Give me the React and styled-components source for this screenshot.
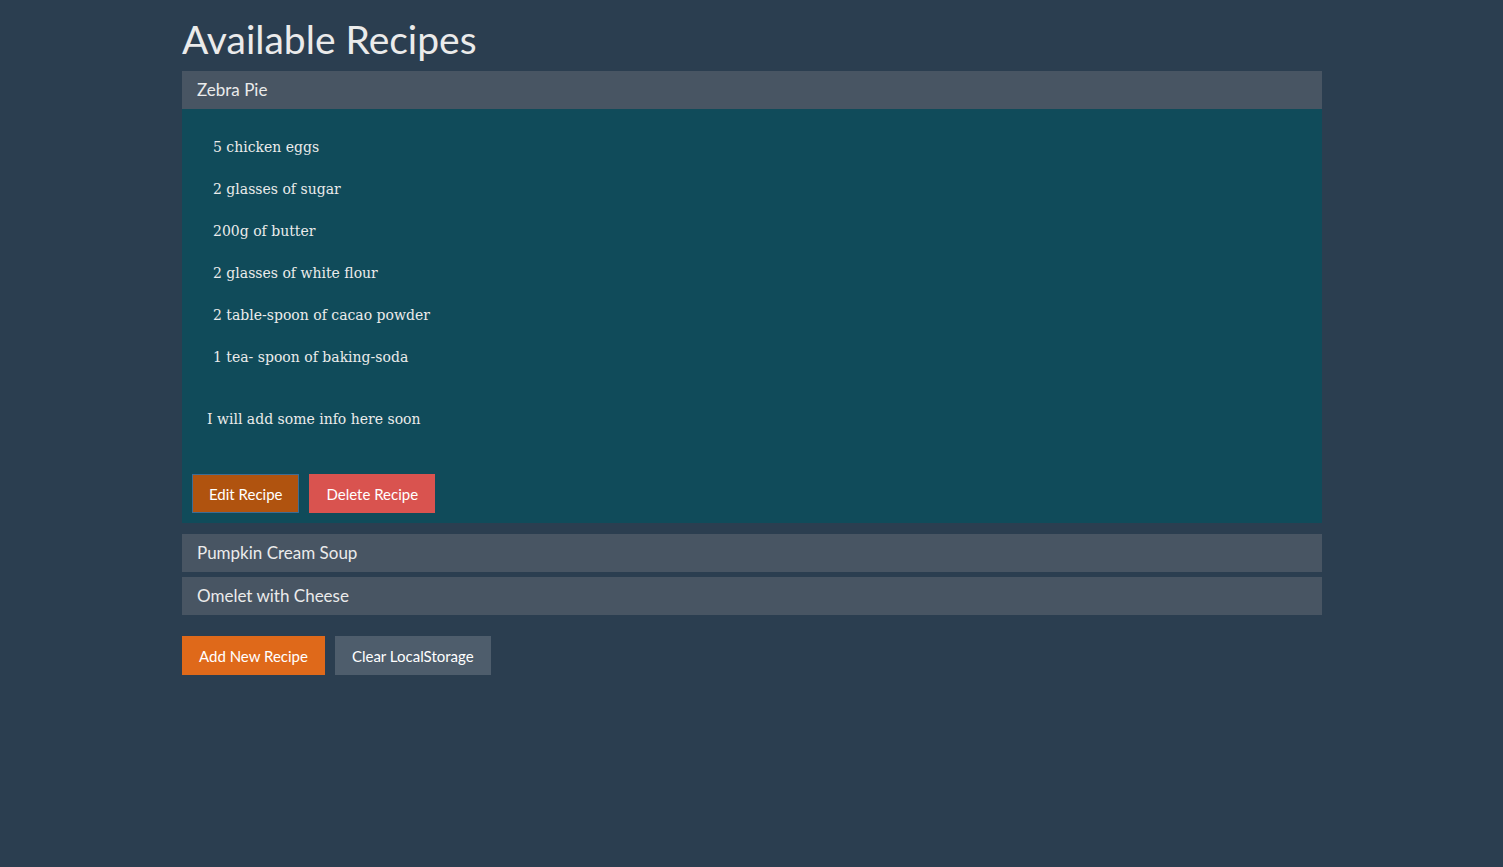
import React, { useState } from 'react'
import styled, { createGlobalStyle } from 'styled-components'

const recipes = [
    {
        name: 'Zebra Pie',
        ingredients: [
            '5 chicken eggs',
            '2 glasses of sugar',
            '200g of butter',
            '2 glasses of white flour',
            '2 table-spoon of cacao powder',
            '1 tea- spoon of baking-soda',
        ],
        info: 'I will add some info here soon',
    },
    { name: 'Pumpkin Cream Soup', ingredients: [], info: '' },
    { name: 'Omelet with Cheese', ingredients: [], info: '' },
]

const GlobalStyle = createGlobalStyle`
    html, body {
        margin: 0;
        padding: 0;
        background-color: #2B3E50;
        font-family: Lato, "Liberation Sans", sans-serif;
        color: #EBEBEB;
    }
`

function App() {
    const [open, setOpen] = useState(0)

    return (
        <Container>
            <GlobalStyle />
            <Title>Available Recipes</Title>
            {recipes.map((recipe, i) => (
                <Panel key={recipe.name} open={open === i}>
                    <PanelHeading onClick={() => setOpen(open === i ? -1 : i)}>
                        {recipe.name}
                    </PanelHeading>
                    {open === i && (
                        <PanelBody>
                            <Ingredients>
                                {recipe.ingredients.map(item => (
                                    <Ingredient key={item}>{item}</Ingredient>
                                ))}
                            </Ingredients>
                            <Info>{recipe.info}</Info>
                            <Actions>
                                <Button variant="edit">Edit Recipe</Button>
                                <Button variant="danger">Delete Recipe</Button>
                            </Actions>
                        </PanelBody>
                    )}
                </Panel>
            ))}
            <Footer>
                <Button variant="primary">Add New Recipe</Button>
                <Button variant="default">Clear LocalStorage</Button>
            </Footer>
        </Container>
    )
}

const Container = styled.div`
    width: 1140px;
    margin: 0 auto;
    padding-left: 1px;
`

const Title = styled.h1`
    font-family: Lato, "Liberation Sans", sans-serif;
    font-weight: 400;
    font-size: 39px;
    line-height: 42px;
    margin: 18px 0 11px;
    color: #EBEBEB;
`

const Panel = styled.div`
    margin-bottom: ${props => props.open ? '11px' : '5px'};
`

const PanelHeading = styled.div`
    height: 38px;
    line-height: 38px;
    padding: 0 15px;
    background-color: #485563;
    font-size: 17px;
    color: #EBEBEB;
    cursor: pointer;
`

const PanelBody = styled.div`
    background-color: #104B5A;
    padding: 28px 10px 10px;
`

const Ingredients = styled.ul`
    list-style: none;
    margin: 0;
    padding: 0 0 0 21px;
`

const Ingredient = styled.li`
    font-family: "DejaVu Serif", "Liberation Serif", serif;
    font-size: 14px;
    line-height: 20px;
    margin-bottom: 22px;
    color: #EBEBEB;
`

const Info = styled.p`
    font-family: "DejaVu Serif", "Liberation Serif", serif;
    font-size: 14px;
    line-height: 20px;
    margin: 42px 0 45px 15px;
    color: #EBEBEB;
`

const Actions = styled.div`
    display: flex;
    gap: 10px;
`

const colors = {
    edit: '#B0530F',
    danger: '#D9534F',
    primary: '#DF691A',
    default: '#4E5D6C',
}

const Button = styled.button`
    height: 39px;
    padding: 0 16px;
    border: 1px solid ${props => props.variant === 'edit' ? '#3D6C94' : colors[props.variant]};
    border-radius: 0;
    background-color: ${props => colors[props.variant]};
    color: #FFFFFF;
    font-family: Lato, "Liberation Sans", sans-serif;
    font-size: 15px;
    cursor: pointer;
`

const Footer = styled.div`
    display: flex;
    gap: 10px;
    margin-top: 21px;
`

export default App
